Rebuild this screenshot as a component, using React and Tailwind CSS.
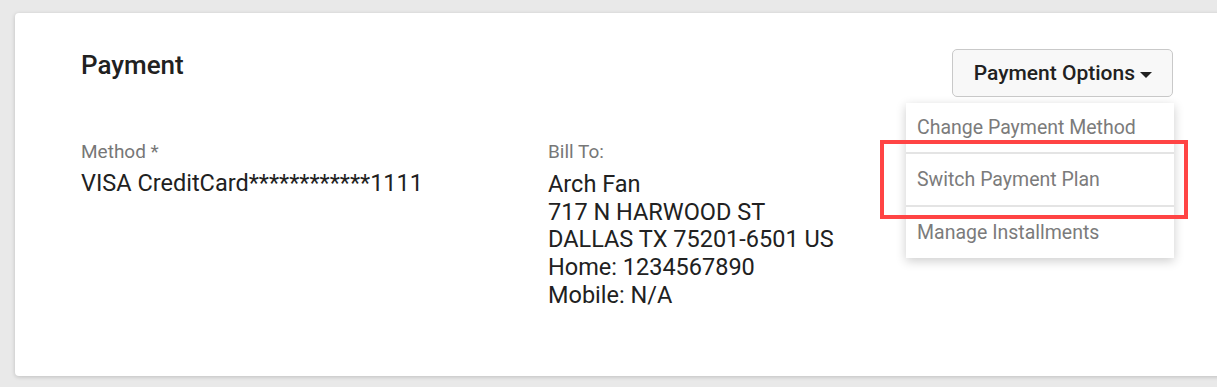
const menuItems = [
  { label: "Change Payment Method", h: "h-[49px]" },
  { label: "Switch Payment Plan", h: "h-[51px]" },
  { label: "Manage Installments", h: "h-[51px]" },
];

const address = [
  "Arch Fan",
  "717 N HARWOOD ST",
  "DALLAS TX 75201-6501 US",
  "Home: 1234567890",
  "Mobile: N/A",
];

export default function App() {
  return (
    <div className="w-[1217px] h-[387px] overflow-hidden bg-[#e9e9e9] pt-[13px] pl-[15px] font-['Roboto',sans-serif]">
      <div className="relative w-[1240px] h-[363px] bg-white rounded-[4px] shadow-[0_1px_4px_rgba(0,0,0,0.18)] pl-[66px] pr-[82px] pt-[36px]">
        <div className="flex items-start justify-between">
          <h2 className="text-[26px] leading-[32px] font-medium text-[#212121]">Payment</h2>
          <div className="relative">
            <button className="flex items-center h-[48px] pl-[21px] pr-[20px] pt-[2px] bg-[#f8f8f8] border border-[#c9c9c9] rounded-[5px] text-[21px] font-medium text-[#212121]">
              Payment Options
              <span className="ml-[5px] mt-[1px] w-0 h-0 border-l-[6px] border-r-[6px] border-t-[6px] border-l-transparent border-r-transparent border-t-[#212121]" />
            </button>
            <div className="absolute right-[-1px] top-[54px] w-[268px] bg-white shadow-[0_3px_10px_rgba(0,0,0,0.2)] z-10">
              {menuItems.map((item, i) => (
                <div key={item.label}>
                  {i > 0 && <div className="h-[2px] bg-[#e4e4e4]" />}
                  <div className={`${item.h} flex items-center pl-[11px] text-[19.5px] text-[#7b7b7b]`}>
                    {item.label}
                  </div>
                </div>
              ))}
            </div>
          </div>
        </div>

        <div className="flex mt-[43px]">
          <div className="w-[467px]">
            <div className="text-[19px] leading-[24px] text-[#777777]">Method *</div>
            <div className="mt-[6px] text-[23.5px] leading-[27.7px] text-[#212121]">
              VISA CreditCard************1111
            </div>
          </div>
          <div>
            <div className="text-[19px] leading-[24px] text-[#777777]">Bill To:</div>
            <div className="mt-[7px] text-[23.5px] leading-[27.7px] text-[#212121]">
              {address.map((line) => (
                <div key={line}>{line}</div>
              ))}
            </div>
          </div>
        </div>

        <div className="absolute left-[865px] top-[127px] w-[308px] h-[79px] border-4 border-[#ff4444] z-20 pointer-events-none" />
      </div>
    </div>
  );
}
